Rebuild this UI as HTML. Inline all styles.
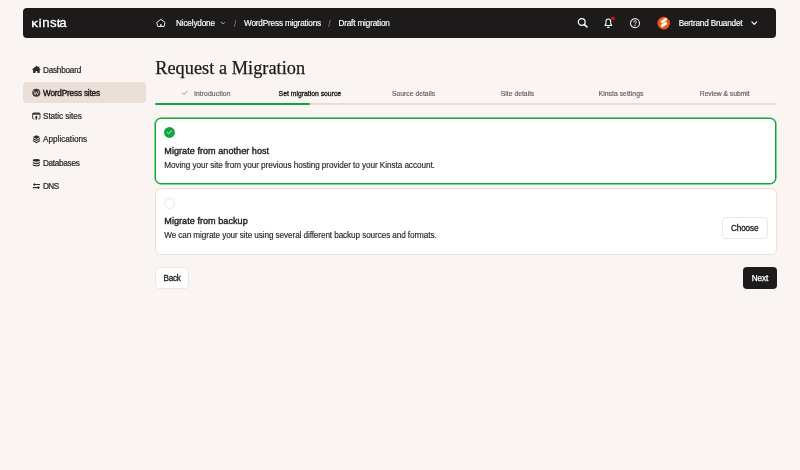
<!DOCTYPE html>
<html lang="en">
<head>
<meta charset="utf-8">
<title>Request a Migration</title>
<style>
*{box-sizing:border-box;margin:0;padding:0}
html,body{width:800px;height:470px;overflow:hidden}
body{background:#faf5f2;font-family:"Liberation Sans",Arial,sans-serif;color:#1d1a1b}
#root{position:absolute;left:0;top:0;width:800px;height:470px;will-change:transform;background:#faf5f2}
.abs{position:absolute}
a{color:inherit;text-decoration:none}
.t{position:absolute;white-space:nowrap;line-height:12px;font-size:8.2px}
/* header */
.hdr{position:absolute;left:23px;top:8px;width:753px;height:30px;background:#1d1a1b;border-radius:4px}
.h{color:#fff;top:18px;letter-spacing:-0.16px;-webkit-text-stroke:0.16px #fff}
.sep{color:#8f8a8b;top:18px;font-size:8.6px}
/* sidebar */
.nav{color:#2b2728;left:43px;font-size:8.2px;-webkit-text-stroke:0.22px #2b2728}
.navon{position:absolute;left:23px;top:82px;width:123px;height:21px;border-radius:4px;background:#ebdfd8}
/* title */
h1{position:absolute;left:155.2px;top:56px;font-family:"Liberation Serif","Times New Roman",serif;font-weight:normal;font-size:18.3px;line-height:24px;color:#1d1a1b;white-space:nowrap;letter-spacing:0.04px;-webkit-text-stroke:0.25px #1d1a1b}
/* steps */
.s{font-size:6.8px;color:#625c5d;top:88px;-webkit-text-stroke:0.15px #625c5d}
.s.cur{color:#1d1a1b;-webkit-text-stroke:0.33px #1d1a1b;letter-spacing:0.01px}
.bar{position:absolute;left:155px;top:103px;width:622px;height:2px;background:#e8ddd6;border-radius:1px}
.bar i{position:absolute;left:0;top:0;width:155px;height:2px;background:#12a53f;border-radius:1px;display:block}
/* cards */
.card{position:absolute;left:155px;width:622px;background:#fff;border-radius:6px}
.c1{top:118px;height:66px;width:621px;border:1px solid #12a53f;box-shadow:0 0 0 0.5px #12a53f}
.c2{top:188px;height:67px;border:1px solid #ebe1da}
.ttl{font-size:9.1px;-webkit-text-stroke:0.36px #1d1a1b;letter-spacing:0.03px;color:#1d1a1b;left:164.3px}
.dsc{font-size:8.2px;color:#2b2728;left:164.2px;-webkit-text-stroke:0.15px #2b2728}
.btn{position:absolute;border-radius:4px;border:0;padding:0;margin:0;font:inherit;color:inherit;text-align:left;appearance:none;-webkit-appearance:none;overflow:visible;cursor:pointer}
.btn.w{background:#fff;border:1px solid #f0e7e2}
.btn.d{background:#1d1a1b}
</style>
</head>
<body>
<div id="root">

<!-- top bar -->
<header>
<div class="hdr"></div>
<svg class="abs" style="left:31px;top:16px" width="38" height="14" viewBox="0 0 38 14"><text y="11.3" font-family="Liberation Sans, Arial, sans-serif" fill="#fff" stroke="#fff" stroke-width="0.3"><tspan x="0.5" font-size="9.7" stroke-width="0.6">K</tspan><tspan x="8.1" font-size="10.6" stroke-width="0.5">i</tspan><tspan x="11.2" font-size="13.2">n</tspan><tspan x="18.9" font-size="13.2">s</tspan><tspan x="25.9" font-size="10.8" stroke-width="0.5">t</tspan><tspan x="28.3" font-size="13.2">a</tspan></text></svg>
<svg class="abs" style="left:155px;top:17px" width="12" height="12" viewBox="0 0 12 12" fill="none" stroke="#fff" stroke-width="0.9" stroke-linejoin="round"><path d="M5.9 2.3 L1.8 5.5 L2.7 9.5 H9.1 L10 5.5 Z"/><rect x="5.2" y="7.2" width="1.4" height="2.3" fill="#fff" stroke="none"/></svg>
<span class="t h" style="left:176px">Nicelydone</span>
<svg class="abs" style="left:220px;top:20px" width="6" height="6" viewBox="0 0 6 6" fill="none" stroke="#d8d5d5" stroke-width="0.8" stroke-linecap="round" stroke-linejoin="round"><path d="M1.3 2.3 L2.9 3.9 L4.5 2.3"/></svg>
<span class="t sep" style="left:234px">/</span>
<span class="t h" style="left:244px;letter-spacing:-0.17px">WordPress migrations</span>
<span class="t sep" style="left:328.2px">/</span>
<span class="t h" style="left:338.4px">Draft migration</span>

<svg class="abs" style="left:576px;top:16px" width="14" height="14" viewBox="0 0 14 14" fill="none" stroke="#fff" stroke-linecap="round"><circle cx="5.7" cy="6" r="3.4" stroke-width="1.2"/><path d="M8.4 8.7 L10.9 10.9" stroke-width="1.6"/></svg>
<svg class="abs" style="left:602px;top:16px" width="14" height="14" viewBox="0 0 14 14" fill="none" stroke="#fff" stroke-width="1.05" stroke-linecap="round" stroke-linejoin="round"><path d="M2.9 9.4 H9.7 L8.7 7.9 V5.4 A2.4 2.5 0 0 0 3.9 5.4 V7.9 Z"/><path d="M5.6 11.3 H7" stroke-width="1.2"/><circle cx="11" cy="2.45" r="1.75" fill="#ee0a14" stroke="none"/></svg>
<svg class="abs" style="left:628px;top:16px" width="14" height="14" viewBox="0 0 14 14" fill="none" stroke="#fff" stroke-linecap="round" stroke-linejoin="round"><circle cx="7" cy="7.2" r="4.5" stroke-width="1.05"/><path d="M5.7 6 a1.3 1.3 0 1 1 2 1.1 c-0.5 0.3 -0.7 0.6 -0.7 1.1" stroke-width="0.9"/><circle cx="7" cy="9.7" r="0.6" fill="#fff" stroke="none"/></svg>
<svg class="abs" style="left:656px;top:16px" width="15" height="15" viewBox="0 0 15 15"><circle cx="7.7" cy="7.1" r="6.3" fill="#f4560f"/><path d="M6.1 5.7 L9.6 3.5 M6.1 9.7 L9.6 7.5" fill="none" stroke="#fff" stroke-width="2.9" stroke-linecap="round"/></svg>
<span class="t h" style="left:678.7px;letter-spacing:-0.19px">Bertrand Bruandet</span>
<svg class="abs" style="left:750px;top:19px" width="9" height="8" viewBox="0 0 9 8" fill="none" stroke="#fff" stroke-width="1.15" stroke-linecap="round" stroke-linejoin="round"><path d="M1.9 2.9 L4.3 5.3 L6.7 2.9"/></svg>
</header>

<!-- sidebar -->
<nav>
<div class="navon"></div>
<a><svg class="abs" style="left:32px;top:65px" width="9" height="9" viewBox="0 0 9 9"><path d="M4.4 0.8 L0.1 4.4 L0.7 5 L1.1 4.7 V8 H3.5 V6.9 A0.9 0.9 0 0 1 5.3 6.9 V8 H7.7 V4.7 L8.1 5 L8.7 4.4 L7.3 3.2 V1.4 H6.2 V2.3 Z" fill="#2f2b2c"/></svg>
<span class="t nav" style="top:65px;letter-spacing:-0.23px">Dashboard</span></a>
<a><svg class="abs" style="left:32px;top:88px" width="9" height="9" viewBox="0 0 9 9"><circle cx="4.3" cy="4.7" r="4" fill="#3a3536"/><path d="M1.7 3 L3.1 6.9 L4.3 3.8 L5.5 6.9 L6.9 3" fill="none" stroke="#ebdfd8" stroke-width="0.7" stroke-linejoin="round" stroke-linecap="round"/></svg>
<span class="t nav" style="top:88px;letter-spacing:-0.17px;color:#1d1a1b;-webkit-text-stroke:0.4px #1d1a1b">WordPress sites</span></a>
<a><svg class="abs" style="left:32px;top:112px" width="9" height="9" viewBox="0 0 9 9" fill="none" stroke="#2f2b2c"><path d="M2.4 7 H1.6 a1 1 0 0 1 -1 -1 V2 a1 1 0 0 1 1 -1 H7 a1 1 0 0 1 1 1 V6 a1 1 0 0 1 -1 1 H6.2" stroke-width="0.9"/><path d="M0.8 1.9 H7.8" stroke-width="1.6"/><path d="M4.3 3.6 L6 5.6 H5 V7.6 H3.6 V5.6 H2.6 Z" fill="#2f2b2c" stroke="none"/></svg>
<span class="t nav" style="top:111px;letter-spacing:-0.07px">Static sites</span></a>
<a><svg class="abs" style="left:32px;top:135px" width="9" height="9" viewBox="0 0 9 9"><path d="M4.4 0.2 L8 2.1 L4.4 4 L0.8 2.1 Z" fill="#2f2b2c"/><path d="M0.9 2.9 V4.2 L4.4 6.1 L8 4.2 V2.9 L4.4 4.8 Z M0.9 5 V6.3 L4.4 8.2 L8 6.3 V5 L4.4 6.9 Z" fill="#2f2b2c"/></svg>
<span class="t nav" style="top:134px;letter-spacing:0px">Applications</span></a>
<a><svg class="abs" style="left:32px;top:158px" width="9" height="9" viewBox="0 0 9 9"><ellipse cx="4.4" cy="2.35" rx="3.6" ry="1.45" fill="#2f2b2c"/><path d="M0.8 3.5 c0 1.8 7.2 1.8 7.2 0 v1.3 c0 1.8 -7.2 1.8 -7.2 0 Z M0.8 5.8 c0 1.8 7.2 1.8 7.2 0 v1.1 c0 1.8 -7.2 1.8 -7.2 0 Z" fill="#2f2b2c"/></svg>
<span class="t nav" style="top:158px;letter-spacing:-0.3px">Databases</span></a>
<a><svg class="abs" style="left:32px;top:181px" width="9" height="9" viewBox="0 0 9 9" fill="none" stroke="#2f2b2c" stroke-width="1.1"><path d="M2.4 3.5 H8 M0.9 6.6 H6.4"/><path d="M0.8 3.5 L3 1.9 V5.1 Z M8.1 6.6 L5.9 5 V8.2 Z" fill="#2f2b2c" stroke="none"/></svg>
<span class="t nav" style="top:181px;letter-spacing:-0.6px">DNS</span></a>
</nav>

<!-- main -->
<main>
<h1>Request a Migration</h1>

<svg class="abs" style="left:181px;top:89px" width="8" height="8" viewBox="0 0 8 8" fill="none" stroke="#7d7778" stroke-width="0.8" stroke-linecap="round" stroke-linejoin="round"><path d="M1.4 4 L2.9 5.5 L6.1 2.4"/></svg>
<span class="t s" style="left:193.9px;letter-spacing:0.1px">Introduction</span>
<span class="t s cur" style="left:278.6px">Set migration source</span>
<span class="t s" style="left:392px">Source details</span>
<span class="t s" style="left:500.8px">Site details</span>
<span class="t s" style="left:598.6px;letter-spacing:0.04px">Kinsta settings</span>
<span class="t s" style="left:699.8px;letter-spacing:-0.06px">Review &amp; submit</span>
<div class="bar"><i></i></div>

<div class="card c1"></div>
<svg class="abs" style="left:163px;top:126px" width="13" height="13" viewBox="0 0 13 13"><circle cx="6.45" cy="6.45" r="5.45" fill="#12a53f"/><path d="M4.1 6.3 L5.5 7.7 L8.6 4.9" fill="none" stroke="#fff" stroke-width="0.8" stroke-linecap="round" stroke-linejoin="round"/></svg>
<span class="t ttl" style="top:145px">Migrate from another host</span>
<span class="t dsc" style="top:160px;letter-spacing:-0.068px">Moving your site from your previous hosting provider to your Kinsta account.</span>

<div class="card c2"></div>
<div class="abs" style="left:164px;top:197.5px;width:11px;height:11px;border-radius:50%;border:1px solid #efe7e2;background:#fff"></div>
<span class="t ttl" style="top:215px">Migrate from backup</span>
<span class="t dsc" style="top:230px;letter-spacing:-0.1px">We can migrate your site using several different backup sources and formats.</span>
<button type="button" class="btn w" style="left:722px;top:217px;width:46px;height:22px"><span class="t" style="left:8px;top:5px;letter-spacing:-0.14px;-webkit-text-stroke:0.3px #1d1a1b">Choose</span></button>

<button type="button" class="btn w" style="left:155px;top:267px;width:34px;height:22px"><span class="t" style="left:7.6px;top:5px;letter-spacing:-0.32px;-webkit-text-stroke:0.3px #1d1a1b">Back</span></button>
<button type="button" class="btn d" style="left:743px;top:267px;width:33.5px;height:22px"><span class="t" style="left:8.7px;top:6px;color:#fff;-webkit-text-stroke:0.25px #fff;letter-spacing:-0.12px">Next</span></button>

</main>
</div>
</body>
</html>
